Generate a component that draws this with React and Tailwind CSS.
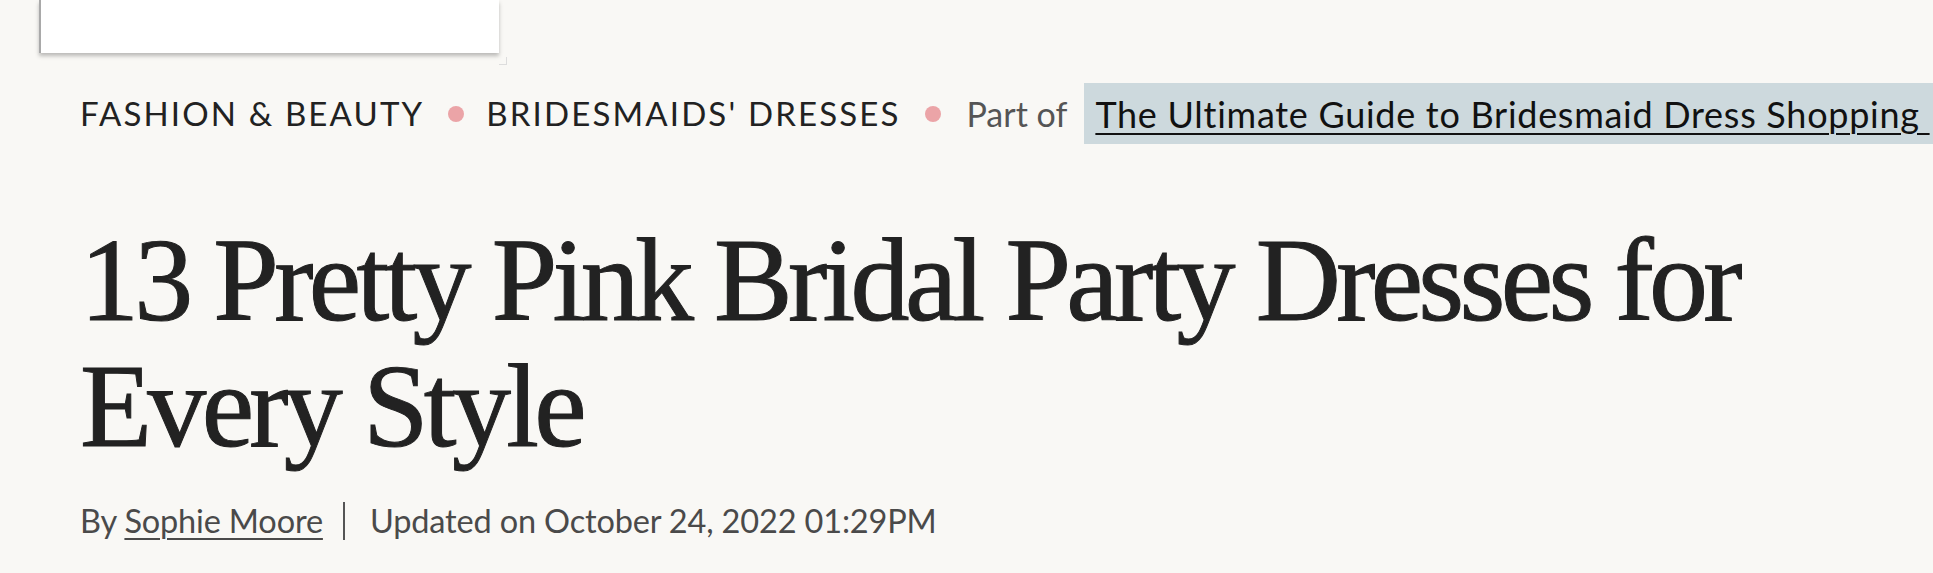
import React from 'react';

export default function App() {
  return (
    <div className="min-h-screen w-full overflow-hidden bg-[#f9f8f5] text-[#222]" style={{ fontFamily: 'Lato, "Liberation Sans", sans-serif' }}>
      {/* top ad frame */}
      <div className="relative ml-[39px] h-[53px] w-[460px] border-l-2 border-[#a9a9a9] bg-white shadow-[0_3px_4px_rgba(0,0,0,0.25)]">
        <div className="absolute -right-[8px] -bottom-[12px] h-[8px] w-[8px] border-r border-b border-[#ddd]" />
      </div>

      <div className="pl-[80px]">
        {/* breadcrumb */}
        <div className="mt-[30px] flex h-[61px] items-center whitespace-nowrap">
          <span className="text-[33px] uppercase tracking-[0.065em]">Fashion &amp; Beauty</span>
          <span className="ml-[24px] mr-[22px] h-[16px] w-[16px] shrink-0 rounded-full bg-[#eba4a7]" />
          <span className="text-[33px] uppercase tracking-[0.065em]">Bridesmaids' Dresses</span>
          <span className="ml-[24px] mr-[26px] h-[16px] w-[16px] shrink-0 rounded-full bg-[#eba4a7]" />
          <span className="text-[34px] text-[#555]">Part of</span>
          <span className="ml-[17px] flex h-[61px] shrink-0 items-center bg-[#cdd9dd] pl-[11px] pr-[40px]">
            <a className="text-[36px] tracking-[0.02em] text-[#111] underline decoration-2 underline-offset-[5px]">
              The Ultimate Guide to Bridesmaid Dress Shopping&nbsp;
            </a>
          </span>
        </div>

        {/* title */}
        <h1
          className="mt-[74px] max-w-[1720px] text-[118px] leading-[126px] tracking-[-0.04em] text-[#222] [-webkit-text-stroke:1px_#222]"
          style={{ fontFamily: '"Liberation Serif", serif' }}
        >
          13 Pretty Pink Bridal Party Dresses for Every Style
        </h1>

        {/* byline */}
        <div className="mt-[27px] flex items-center text-[32.5px] tracking-[-0.005em] text-[#4a4a4a]">
          <span>By&nbsp;</span>
          <a className="underline decoration-2 underline-offset-[5px]">Sophie Moore</a>
          <span className="ml-[20px] mr-[25px] h-[38px] w-[2px] bg-[#555]" />
          <span>Updated on October 24, 2022 01:29PM</span>
        </div>
      </div>
    </div>
  );
}
